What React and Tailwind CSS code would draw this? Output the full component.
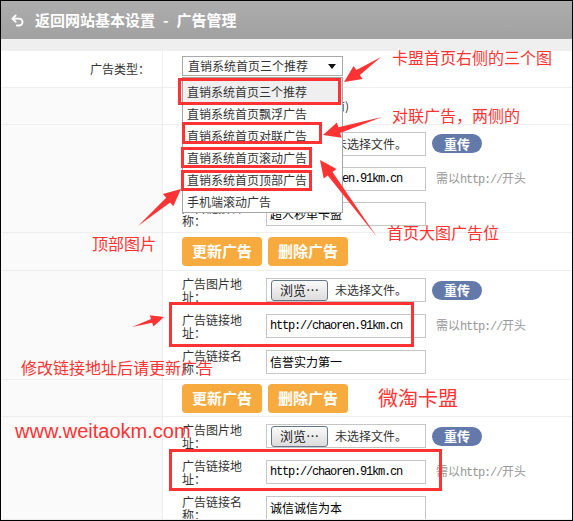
import { Undo2 } from "lucide-react";

const CJK = { fontFamily: '"Noto Sans CJK SC", "Noto Sans", sans-serif' };

const options = [
  "直销系统首页三个推荐",
  "直销系统首页飘浮广告",
  "直销系统首页对联广告",
  "直销系统首页滚动广告",
  "直销系统首页顶部广告",
  "手机端滚动广告",
];

// tapered red arrow, tail -> tip
const arrowPoints = (x1, y1, x2, y2, head = 17, hw = 8, sw = 3) => {
  const dx = x2 - x1;
  const dy = y2 - y1;
  const len = Math.hypot(dx, dy);
  const ux = dx / len;
  const uy = dy / len;
  const nx = -uy;
  const ny = ux;
  const bx = x2 - ux * head;
  const by = y2 - uy * head;
  return [
    [x1, y1],
    [bx + nx * sw, by + ny * sw],
    [bx + nx * hw, by + ny * hw],
    [x2, y2],
    [bx - nx * hw, by - ny * hw],
    [bx - nx * sw, by - ny * sw],
  ]
    .map((p) => p.map((v) => v.toFixed(1)).join(","))
    .join(" ");
};

const arrows = [
  [381, 57, 344, 82],
  [382, 117, 323, 135],
  [377, 237, 320, 160],
  [138, 226, 181, 189],
  [132, 327, 164, 317, 13, 6, 2],
];

const Label = ({ children }) => (
  <div className="w-[70px] mr-[14px] text-[12px] leading-[13px] text-[#333]">
    {children}
  </div>
);

const LeftCell = () => (
  <div className="w-[162px] shrink-0 self-stretch border-r border-[#eee] bg-[#fafafa]"></div>
);

const Mono = ({ children }) => (
  <span
    className="tracking-[-1.2px]"
    style={{ fontFamily: '"Liberation Mono", monospace' }}
  >
    {children}
  </span>
);

const AdBlock = ({ name, height, row }) => (
  <div className={`flex border-b border-[#eee] ${height}`}>
    <LeftCell />
    <div className="flex flex-col pt-[1px] pl-[19px] overflow-hidden">
      <div className={`${row} shrink-0 flex items-center`}>
        <Label>广告图片地址：</Label>
        <div className="w-[160px] h-[24px] border border-[#c6c6c6] flex items-center pl-[4px]">
          <div className="w-[57px] h-[21px] rounded-[3px] border border-[#66778c] bg-linear-to-b from-[#fafafa] to-[#dcdcdc] flex items-center justify-center text-[13px] text-[#222]">
            浏览…
          </div>
          <span className="ml-[7px] text-[12px] text-[#333]">未选择文件。</span>
        </div>
        <div className="ml-[6px] w-[50px] h-[19px] rounded-full bg-[#6279aa] flex items-center justify-center text-white text-[13px] font-bold">
          重传
        </div>
      </div>
      <div className={`${row} shrink-0 flex items-center`}>
        <Label>广告链接地址：</Label>
        <div className="w-[160px] h-[24px] border border-[#c6c6c6] flex items-center pl-[3px] text-[12px] text-black">
          <Mono>http://chaoren.91km.cn</Mono>
        </div>
        <span className="ml-[10px] text-[12px] text-[#999]">
          需以<Mono>http://</Mono>开头
        </span>
      </div>
      <div className={`${row} shrink-0 flex items-center`}>
        <Label>广告链接名称：</Label>
        <div className="w-[160px] h-[24px] border border-[#c6c6c6] flex items-center pl-[3px] text-[12px] text-black">
          {name}
        </div>
      </div>
    </div>
  </div>
);

const ButtonRow = ({ height }) => (
  <div className={`flex border-b border-[#eee] ${height}`}>
    <LeftCell />
    <div className="flex items-center gap-[6px] pl-[19px]">
      <div className="w-[80px] h-[29px] rounded-[4px] bg-[#f7ab3e] flex items-center justify-center text-white text-[15px] font-bold">
        更新广告
      </div>
      <div className="w-[80px] h-[29px] rounded-[4px] bg-[#f7ab3e] flex items-center justify-center text-white text-[15px] font-bold">
        删除广告
      </div>
    </div>
  </div>
);

const Note = ({ className, children }) => (
  <div
    className={`absolute text-[16px] leading-[16px] text-[#f33] whitespace-nowrap ${className}`}
  >
    {children}
  </div>
);

const Box = ({ className }) => (
  <div className={`absolute border-[3px] border-[#f33] ${className}`}></div>
);

export default function App() {
  return (
    <div className="relative w-[573px] h-[521px] overflow-hidden" style={CJK}>
      <div className="h-full border border-black bg-white flex flex-col">
        <div className="h-[38px] shrink-0 flex items-center bg-linear-to-b from-[#adadad] to-[#a1a1a1] text-white text-[15px] font-bold">
          <Undo2 size={15} strokeWidth={3} className="ml-[9px]" />
          <span className="ml-[10px]">返回网站基本设置</span>
          <span className="mx-[8px]">-</span>
          <span>广告管理</span>
        </div>
        <div className="h-[12px] shrink-0 bg-[#efefef]"></div>

        <div className="h-[37px] shrink-0 flex border-b border-[#eee]">
          <div className="w-[162px] shrink-0 border-r border-[#eee] flex items-center justify-end pr-[12px] text-[12px] text-[#333]">
            广告类型：
          </div>
          <div className="pl-[19px] pt-[5px]">
            <div className="w-[161px] h-[20px] border border-[#a9a9a9] flex items-center pl-[5px] text-[12px] text-[#333]">
              直销系统首页三个推荐
              <svg width="8" height="5" viewBox="0 0 8 5" className="ml-auto mr-[6px]">
                <path d="M0 0h8L4 5z" fill="#111" />
              </svg>
            </div>
          </div>
        </div>

        <div className="h-[37px] shrink-0 flex border-b border-[#eee]">
          <LeftCell />
          <div className="pl-[19px] flex items-center">
            <div className="w-[167px] text-right text-[12px] text-[#333]">
              (数字越大越靠前)
            </div>
          </div>
        </div>

        <AdBlock name="超人秒单卡盟" height="h-[108px] shrink-0" row="h-[35px]" />
        <ButtonRow height="h-[38px] shrink-0" />
        <AdBlock name="信誉实力第一" height="h-[109px] shrink-0" row="h-[36px]" />
        <ButtonRow height="h-[37px] shrink-0" />
        <AdBlock name="诚信诚信为本" height="flex-1 min-h-0" row="h-[36px]" />
      </div>

      {/* open select list */}
      <div className="absolute left-[182px] top-[77px] w-[161px] h-[136px] border border-[#a5a5a5] bg-white pt-[3px]">
        {options.map((o, i) => (
          <div
            key={i}
            className={
              i === 0
                ? "h-[22px] flex items-center pl-[4px] text-[12px] text-[#333] bg-[#efefef]"
                : "h-[22px] flex items-center pl-[4px] text-[12px] text-[#333]"
            }
          >
            {o}
          </div>
        ))}
      </div>

      {/* annotations */}
      <Box className="left-[178px] top-[78px] w-[163px] h-[27px]" />
      <Box className="left-[182px] top-[122px] w-[140px] h-[22px]" />
      <Box className="left-[181px] top-[147px] w-[131px] h-[21px]" />
      <Box className="left-[181px] top-[170px] w-[131px] h-[21px]" />
      <Box className="left-[169px] top-[302px] w-[245px] h-[45px]" />
      <Box className="left-[169px] top-[449px] w-[273px] h-[42px]" />

      <svg
        width="573"
        height="521"
        className="absolute left-0 top-0 pointer-events-none"
      >
        {arrows.map((a, i) => (
          <polygon key={i} points={arrowPoints(...a)} fill="#f33" />
        ))}
      </svg>

      <Note className="left-[392px] top-[49px]">卡盟首页右侧的三个图</Note>
      <Note className="left-[392px] top-[107px]">对联广告，两侧的</Note>
      <Note className="left-[387px] top-[224px]">首页大图广告位</Note>
      <Note className="left-[92px] top-[235px]">顶部图片</Note>
      <Note className="left-[21px] top-[359px]">修改链接地址后请更新广告</Note>
      <Note className="left-[378px] top-[388px] text-[20px] leading-[20px]">
        微淘卡盟
      </Note>
      <div
        className="absolute left-[15px] top-[421px] text-[20px] leading-[20px] text-[#f33]"
        style={{ fontFamily: '"Liberation Sans", Arial, sans-serif' }}
      >
        www.weitaokm.com
      </div>
    </div>
  );
}
